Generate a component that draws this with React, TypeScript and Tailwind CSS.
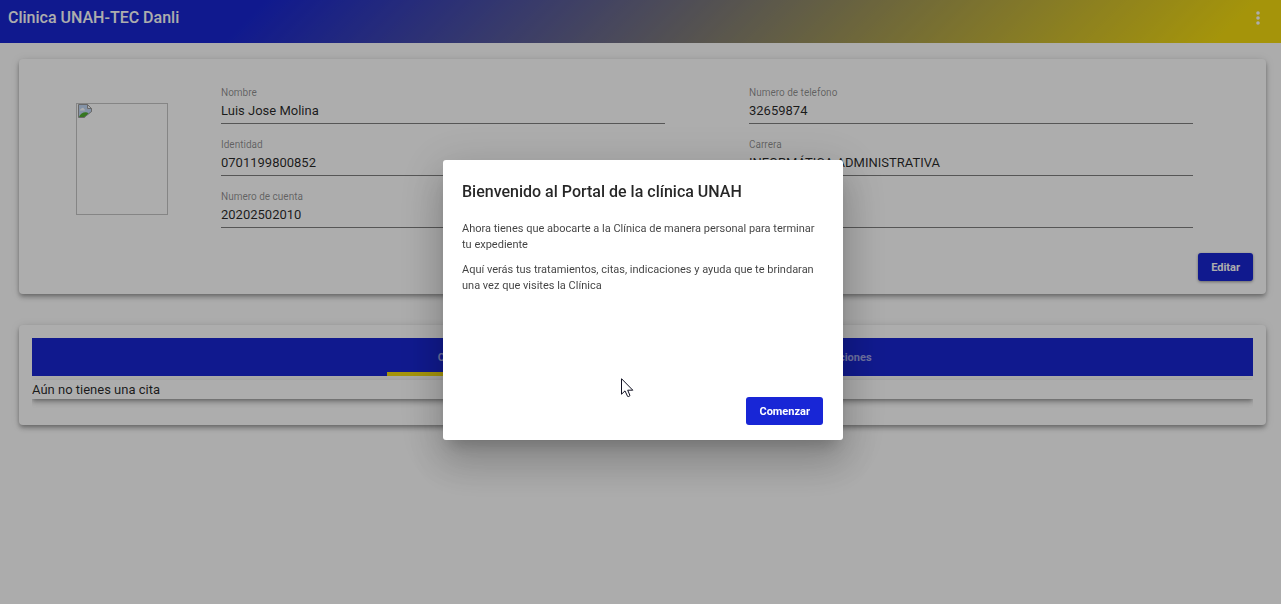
import React from 'react';

type FieldProps = { id: string; label: string; value: string };

function Field({ id, label, value }: FieldProps) {
  return (
    <div className="flex min-w-0 flex-col">
      <label htmlFor={id} className="text-[10px] leading-[14px] text-black/45">
        {label}
      </label>
      <input
        id={id}
        type="text"
        readOnly
        defaultValue={value}
        className="h-6 w-full border-b border-black/50 bg-transparent pb-0.5 text-[13px] text-black/85 outline-none"
      />
    </div>
  );
}

function PhotoPlaceholder() {
  return (
    <div role="img" aria-label="Foto" className="mt-[17px] h-28 w-[92px] shrink-0 border border-[#c4c4c4] pl-px">
      <svg width="14" height="14" viewBox="0 0 14 14">
        <path d="M0.5 0.5H9.5L13.5 4.5V13.5H0.5Z" fill="#c3d9f7" stroke="#9a9a9a" />
        <path d="M2 6.5C2 5 3.2 5 3.6 4.3C4.4 3.2 6 3.8 6 5C7 5 7.2 6.2 6.5 6.5Z" fill="#fff" />
        <path d="M1 13C2 9.5 5.5 8 8 8.3C9.6 8.6 10 9 10.5 9.5L7 13Z" fill="#4fae30" />
        <path d="M9.5 0.5V4.5H13.5Z" fill="#fff" stroke="#9a9a9a" />
        <path d="M6 14L14 7.5V14Z" fill="#fff" />
        <path d="M6 13.5L13.5 7.5" stroke="#9a9a9a" />
      </svg>
    </div>
  );
}

const cardShadow =
  'shadow-[0_2px_4px_-1px_rgba(0,0,0,0.3),0_4px_5px_0_rgba(0,0,0,0.14),0_1px_10px_0_rgba(0,0,0,0.12)]';

const tabs = ['Citas', 'Historial', 'Tratamientos', 'Prescripciones'];

const fields: FieldProps[] = [
  { id: 'nombre', label: 'Nombre', value: 'Luis Jose Molina' },
  { id: 'telefono', label: 'Numero de telefono', value: '32659874' },
  { id: 'identidad', label: 'Identidad', value: '0701199800852' },
  { id: 'carrera', label: 'Carrera', value: 'INFORMÁTICA ADMINISTRATIVA' },
  { id: 'cuenta', label: 'Numero de cuenta', value: '20202502010' },
  { id: 'centro', label: 'Centro', value: 'TEC Danli' },
];

export default function App() {
  return (
    <div className="min-h-screen bg-[#fefefe] font-[Roboto,sans-serif] text-black/85">
      <header className="flex h-[43px] items-start justify-between bg-[linear-gradient(135deg,#1826d2_20%,#f3db10_95%)] pt-2 pr-[15px] pl-2 text-white">
        <h1 className="text-base leading-5 font-medium">Clinica UNAH-TEC Danli</h1>
        <button type="button" aria-label="Menú" className="flex h-5 w-4 items-center justify-center">
          <svg width="4" height="14" viewBox="0 0 4 14" fill="currentColor">
            <circle cx="2" cy="2" r="1.8" />
            <circle cx="2" cy="7" r="1.8" />
            <circle cx="2" cy="12" r="1.8" />
          </svg>
        </button>
      </header>

      <main className="flex flex-col gap-[31px] pt-4 pr-[15px] pl-[19px]">
        <section className={`flex flex-col gap-[25px] rounded bg-white p-[13px] ${cardShadow}`}>
          <div className="flex items-start gap-[53px] pt-[14px] pr-[60px] pl-11">
            <PhotoPlaceholder />
            <div className="grid flex-1 grid-cols-2 gap-x-[84px] gap-y-[14px]">
              {fields.map((f) => (
                <Field key={f.id} {...f} />
              ))}
            </div>
          </div>
          <button
            type="button"
            className="h-7 self-end rounded-[3px] bg-[#1826d2] px-[13px] pt-0.5 text-[11px] font-bold text-white shadow-[0_1px_3px_rgba(0,0,0,0.4)]"
          >
            Editar
          </button>
        </section>

        <section className={`rounded bg-white p-[13px] ${cardShadow}`}>
          <div role="tablist" className="flex h-[38px] justify-center bg-[#1826d2]">
            {tabs.map((tab, i) => (
              <button
                key={tab}
                type="button"
                role="tab"
                aria-selected={i === 0}
                className={`w-32 border-b-4 pt-1.5 text-[11px] font-bold text-white/60 ${
                  i === 0 ? 'border-[#f3db10]' : 'border-transparent'
                }`}
              >
                {tab}
              </button>
            ))}
          </div>
          <div role="tabpanel" className="overflow-hidden pt-1 pb-[13px]">
            <p className={`bg-white text-[13px] leading-[19px] ${cardShadow}`}>Aún no tienes una cita</p>
          </div>
        </section>
      </main>

      <div className="fixed inset-0 flex items-center justify-center bg-black/32 pb-1 pl-[5px]">
        <div
          role="dialog"
          aria-modal="true"
          aria-labelledby="dialog-title"
          className="relative flex h-[280px] w-[400px] flex-col rounded-[3px] bg-white pt-5 pr-5 pb-[15px] pl-[19px] shadow-[0_11px_15px_-7px_rgba(0,0,0,0.2),0_24px_38px_3px_rgba(0,0,0,0.14),0_9px_46px_8px_rgba(0,0,0,0.12)]"
        >
          <h2 id="dialog-title" className="text-base leading-6 font-medium">
            Bienvenido al Portal de la clínica UNAH
          </h2>
          <div className="mt-[17px] flex flex-1 flex-col gap-[9px] text-[11px] leading-4 text-black/75">
            <p>Ahora tienes que abocarte a la Clínica de manera personal para terminar tu expediente</p>
            <p>Aquí verás tus tratamientos, citas, indicaciones y ayuda que te brindaran una vez que visites la Clínica</p>
          </div>
          <button
            type="button"
            className="h-7 self-end rounded-[3px] bg-[#1826d6] px-[13px] pt-0.5 text-[11px] font-bold text-white"
          >
            Comenzar
          </button>
          <svg className="absolute top-[218px] left-[178px]" width="13" height="20" viewBox="0 0 13 20">
            <path
              d="M0.5 0.7V16.2L4 12.9L6.6 18.4Q7.6 19 9 17.6L6.7 12.2H11.8Z"
              fill="#fff"
              stroke="#111122"
              strokeLinejoin="round"
            />
          </svg>
        </div>
      </div>
    </div>
  );
}
